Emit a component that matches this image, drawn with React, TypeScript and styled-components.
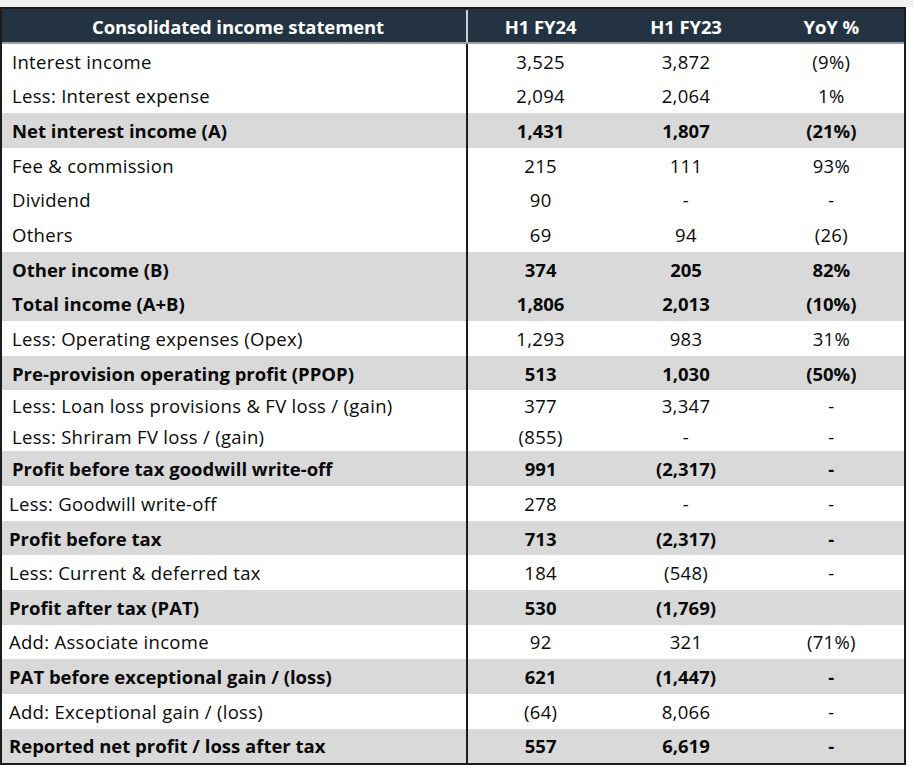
import React from "react";
import styled, { createGlobalStyle } from "styled-components";

const Global = createGlobalStyle`
  html, body { margin: 0; padding: 0; background: #ffffff; }
  body { font-family: "Open Sans", Lato, "Liberation Sans", sans-serif; }
`;

const Page = styled.div`
  width: 914px;
  height: 769px;
  background: linear-gradient(#f1f1f1 0, #f1f1f1 7px, #ffffff 7px);
  padding-top: 7px;
  box-sizing: border-box;
`;

const Table = styled.div`
  width: 906px;
  box-sizing: border-box;
  border: 2px solid #1c1c1c;
  background: #ffffff;
`;

const HeaderRow = styled.div`
  display: grid;
  grid-template-columns: 466px 1fr 1fr 1fr;
  height: 35px;
  padding-top: 1px;
  background: #233342;
  border-bottom: 2px solid #9aa0a6;
  box-sizing: border-box;
  color: #ffffff;
  font-weight: 700;
  font-size: 18.5px;
  letter-spacing: -0.1px;
`;

const HeaderCell = styled.div<{ $first?: boolean }>`
  display: flex;
  align-items: center;
  justify-content: center;
  ${(p) => (p.$first ? "border-right: 2px solid #c9ced3; padding-left: 8px;" : "")}
`;

const Row = styled.div<{ $shade?: boolean; $tight?: boolean }>`
  display: grid;
  grid-template-columns: 466px 1fr 1fr 1fr;
  height: ${(p) => (p.$tight ? "30.5px" : "34.65px")};
  background: ${(p) => (p.$shade ? "#d9d9d9" : "#ffffff")};
  font-weight: ${(p) => (p.$shade ? 700 : 400)};
  letter-spacing: ${(p) => (p.$shade ? "0px" : "0.3px")};
  font-size: 18.5px;
  color: #0a0a0a;
`;

const LabelCell = styled.div<{ $indent: number }>`
  display: flex;
  align-items: center;
  padding-left: ${(p) => p.$indent}px;
  border-right: 2px solid #1c1c1c;
  white-space: nowrap;
`;

const NumCell = styled.div`
  display: flex;
  align-items: center;
  justify-content: center;
  white-space: nowrap;
`;

type R = { label: string; a: string; b: string; y: string; shade?: boolean; tight?: boolean; indent?: number };

const rows: R[] = [
  { label: "Interest income", a: "3,525", b: "3,872", y: "(9%)" },
  { label: "Less: Interest expense", a: "2,094", b: "2,064", y: "1%" },
  { label: "Net interest income (A)", a: "1,431", b: "1,807", y: "(21%)", shade: true },
  { label: "Fee & commission", a: "215", b: "111", y: "93%" },
  { label: "Dividend", a: "90", b: "-", y: "-" },
  { label: "Others", a: "69", b: "94", y: "(26)" },
  { label: "Other income (B)", a: "374", b: "205", y: "82%", shade: true },
  { label: "Total income (A+B)", a: "1,806", b: "2,013", y: "(10%)", shade: true },
  { label: "Less: Operating expenses (Opex)", a: "1,293", b: "983", y: "31%" },
  { label: "Pre-provision operating profit (PPOP)", a: "513", b: "1,030", y: "(50%)", shade: true },
  { label: "Less: Loan loss provisions & FV loss / (gain)", a: "377", b: "3,347", y: "-", tight: true },
  { label: "Less: Shriram FV loss / (gain)", a: "(855)", b: "-", y: "-", tight: true },
  { label: "Profit before tax goodwill write-off", a: "991", b: "(2,317)", y: "-", shade: true },
  { label: "Less: Goodwill write-off", a: "278", b: "-", y: "-", indent: 7 },
  { label: "Profit before tax", a: "713", b: "(2,317)", y: "-", shade: true, indent: 7 },
  { label: "Less: Current & deferred tax", a: "184", b: "(548)", y: "-", indent: 7 },
  { label: "Profit after tax (PAT)", a: "530", b: "(1,769)", y: "", shade: true, indent: 7 },
  { label: "Add: Associate income", a: "92", b: "321", y: "(71%)", indent: 7 },
  { label: "PAT before exceptional gain / (loss)", a: "621", b: "(1,447)", y: "-", shade: true, indent: 7 },
  { label: "Add: Exceptional gain / (loss)", a: "(64)", b: "8,066", y: "-", indent: 7 },
  { label: "Reported net profit / loss after tax", a: "557", b: "6,619", y: "-", shade: true, indent: 7 },
];

export default function App() {
  return (
    <Page>
      <Global />
      <Table>
        <HeaderRow>
          <HeaderCell $first>Consolidated income statement</HeaderCell>
          <HeaderCell>H1 FY24</HeaderCell>
          <HeaderCell>H1 FY23</HeaderCell>
          <HeaderCell>YoY %</HeaderCell>
        </HeaderRow>
        {rows.map((r) => (
          <Row key={r.label} $shade={r.shade} $tight={r.tight}>
            <LabelCell $indent={r.indent ?? 10}>{r.label}</LabelCell>
            <NumCell>{r.a}</NumCell>
            <NumCell>{r.b}</NumCell>
            <NumCell>{r.y}</NumCell>
          </Row>
        ))}
      </Table>
    </Page>
  );
}
